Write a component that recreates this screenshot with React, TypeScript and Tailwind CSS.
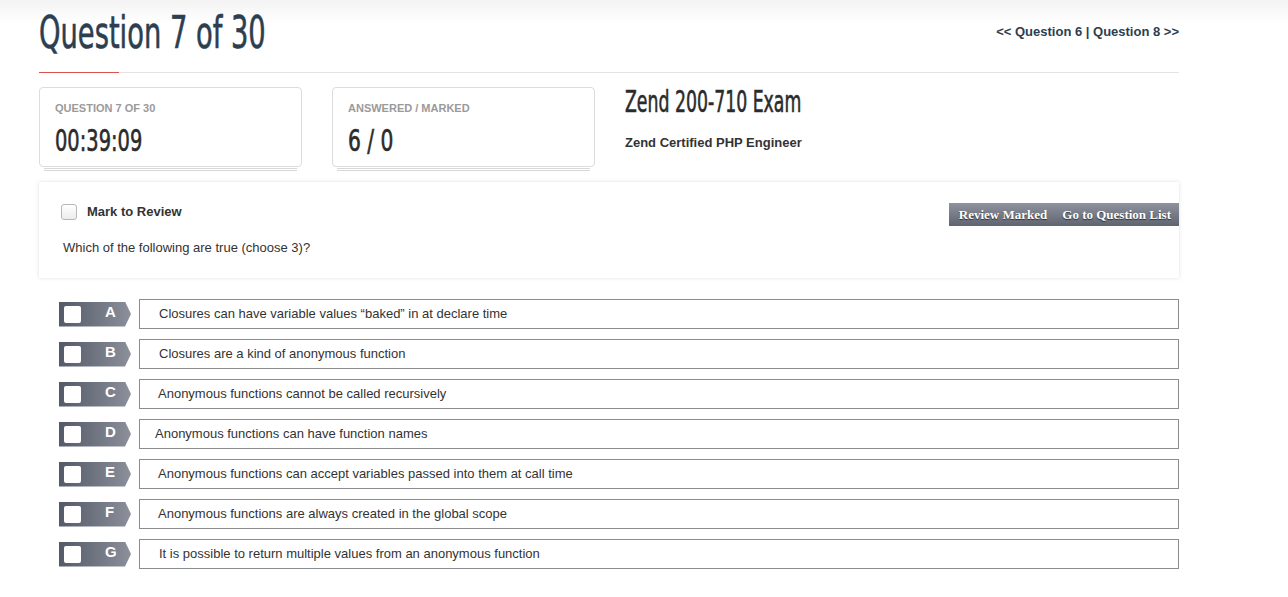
import React from "react";

const oswaldFont = '"DejaVu Sans Condensed", "DejaVu Sans", sans-serif';

function Osw({ children, sx, className }: { children: React.ReactNode; sx: string; className?: string }) {
  return (
    <span
      className={`inline-block origin-left whitespace-nowrap [-webkit-text-stroke:0.6px_currentColor] ${sx} ${className ?? ""}`}
      style={{ fontFamily: oswaldFont }}
    >
      {children}
    </span>
  );
}

const options: { l: string; t: string; pl: string }[] = [
  { l: "A", t: "Closures can have variable values \u201cbaked\u201d in at declare time", pl: "pl-[19px]" },
  { l: "B", t: "Closures are a kind of anonymous function", pl: "pl-[19px]" },
  { l: "C", t: "Anonymous functions cannot be called recursively", pl: "pl-[18px]" },
  { l: "D", t: "Anonymous functions can have function names", pl: "pl-[15px]" },
  { l: "E", t: "Anonymous functions can accept variables passed into them at call time", pl: "pl-[18px]" },
  { l: "F", t: "Anonymous functions are always created in the global scope", pl: "pl-[18px]" },
  { l: "G", t: "It is possible to return multiple values from an anonymous function", pl: "pl-[19px]" },
];

function StatCard({ label, value, sx }: { label: string; value: string; sx: string }) {
  return (
    <div className="relative w-[263px]">
      <div className="relative z-10 h-[80px] rounded-[4px] border border-[#dcdcdc] bg-white pl-[15px] pt-[13px]">
        <div className="text-[11px] font-bold uppercase leading-[14px] text-[#9a9a9a]">{label}</div>
        <div className="mt-[10px] h-[32px] text-[30px] leading-[32px] text-[#2b2b2b]">
          <Osw sx={sx}>{value}</Osw>
        </div>
      </div>
      <div className="mx-[5px] mt-[1px] h-[1px] bg-[#d8d8d8]" />
      <div className="mx-[5px] mt-[1px] h-[1px] bg-[#d8d8d8]" />
    </div>
  );
}

export default function App() {
  return (
    <div className="min-h-[597px] w-full bg-white" style={{ fontFamily: '"Liberation Sans", Arial, sans-serif' }}>
      <div className="h-[24px] w-full bg-gradient-to-b from-[#f3f3f3] to-white" />
      <div className="-mt-[24px] ml-[39px] w-[1140px]">
        <div className="flex items-start justify-between pt-[8px]">
          <h1 className="h-[50px] text-[45px] leading-[50px] text-[#2c3e50]">
            <Osw sx="scale-x-[0.675]">Question 7 of 30</Osw>
          </h1>
          <div className="mt-[14px] text-[13px] font-bold text-[#2c3e50]">
            &lt;&lt; Question 6 | Question 8 &gt;&gt;
          </div>
        </div>
        <div className="relative mt-[14px] h-[1px] bg-[#e3e3e3]">
          <div className="absolute left-0 top-0 h-[1px] w-[80px] bg-[#d9534f]" />
        </div>

        <div className="mt-[14px] flex items-start">
          <StatCard label="Question 7 of 30" value="00:39:09" sx="scale-x-[0.72]" />
          <div className="ml-[30px]">
            <StatCard label="Answered / Marked" value="6 / 0" sx="scale-x-[0.75]" />
          </div>
          <div className="ml-[30px] -mt-[2px]">
            <div className="h-[32px] text-[31px] leading-[32px] text-[#2b2b2b]">
              <Osw sx="scale-x-[0.62]">Zend 200-710 Exam</Osw>
            </div>
            <div className="mt-[16px] text-[13px] font-bold text-[#333]">Zend Certified PHP Engineer</div>
          </div>
        </div>

        <div className="mt-[11px] h-[96px] bg-white px-[22px] pt-[20px] shadow-[0_0_4px_rgba(0,0,0,0.13)]">
          <div className="flex items-start justify-between">
            <label className="flex items-center">
              <span className="inline-block h-[16px] w-[16px] rounded-[3px] border border-[#b8b8b8] bg-gradient-to-b from-white to-[#ececec]" />
              <span className="ml-[10px] text-[13px] font-bold text-[#333]">Mark to Review</span>
            </label>
            <div
              className="-mr-[22px] mt-[1px] flex h-[23px] items-center gap-[15px] bg-gradient-to-b from-[#8e939e] to-[#5f6471] pl-[10px] pr-[8px] text-[13px] font-bold text-white"
              style={{ fontFamily: '"Liberation Serif", "Times New Roman", serif', textShadow: "0 1px 1px rgba(0,0,0,0.6)" }}
            >
              <span>Review Marked</span>
              <span>Go to Question List</span>
            </div>
          </div>
          <div className="mt-[12px] pl-[2px] text-[13px] text-[#333]">Which of the following are true (choose 3)?</div>
        </div>

        <div className="mt-[21px] flex flex-col gap-[10px]">
          {options.map((o) => (
            <div key={o.l} className="flex h-[30px] items-center">
              <div
                className="ml-[20px] flex h-[25px] w-[72px] items-center"
                style={{
                  clipPath: "polygon(0 0, 66px 0, 72px 50%, 66px 100%, 0 100%)",
                  background: "linear-gradient(to right, #555a68 0%, #6c717e 45%, #8c909b 100%)",
                }}
              >
                <span className="ml-[5px] inline-block h-[17px] w-[17px] rounded-[2px] bg-white" />
                <span className="ml-[24px] -mt-[3px] text-[15px] font-bold text-white">{o.l}</span>
              </div>
              <div className={`ml-[8px] flex h-[30px] flex-1 items-center border border-[#8a8d90] ${o.pl} text-[13px] text-[#333]`}>
                {o.t}
              </div>
            </div>
          ))}
        </div>
      </div>
    </div>
  );
}
